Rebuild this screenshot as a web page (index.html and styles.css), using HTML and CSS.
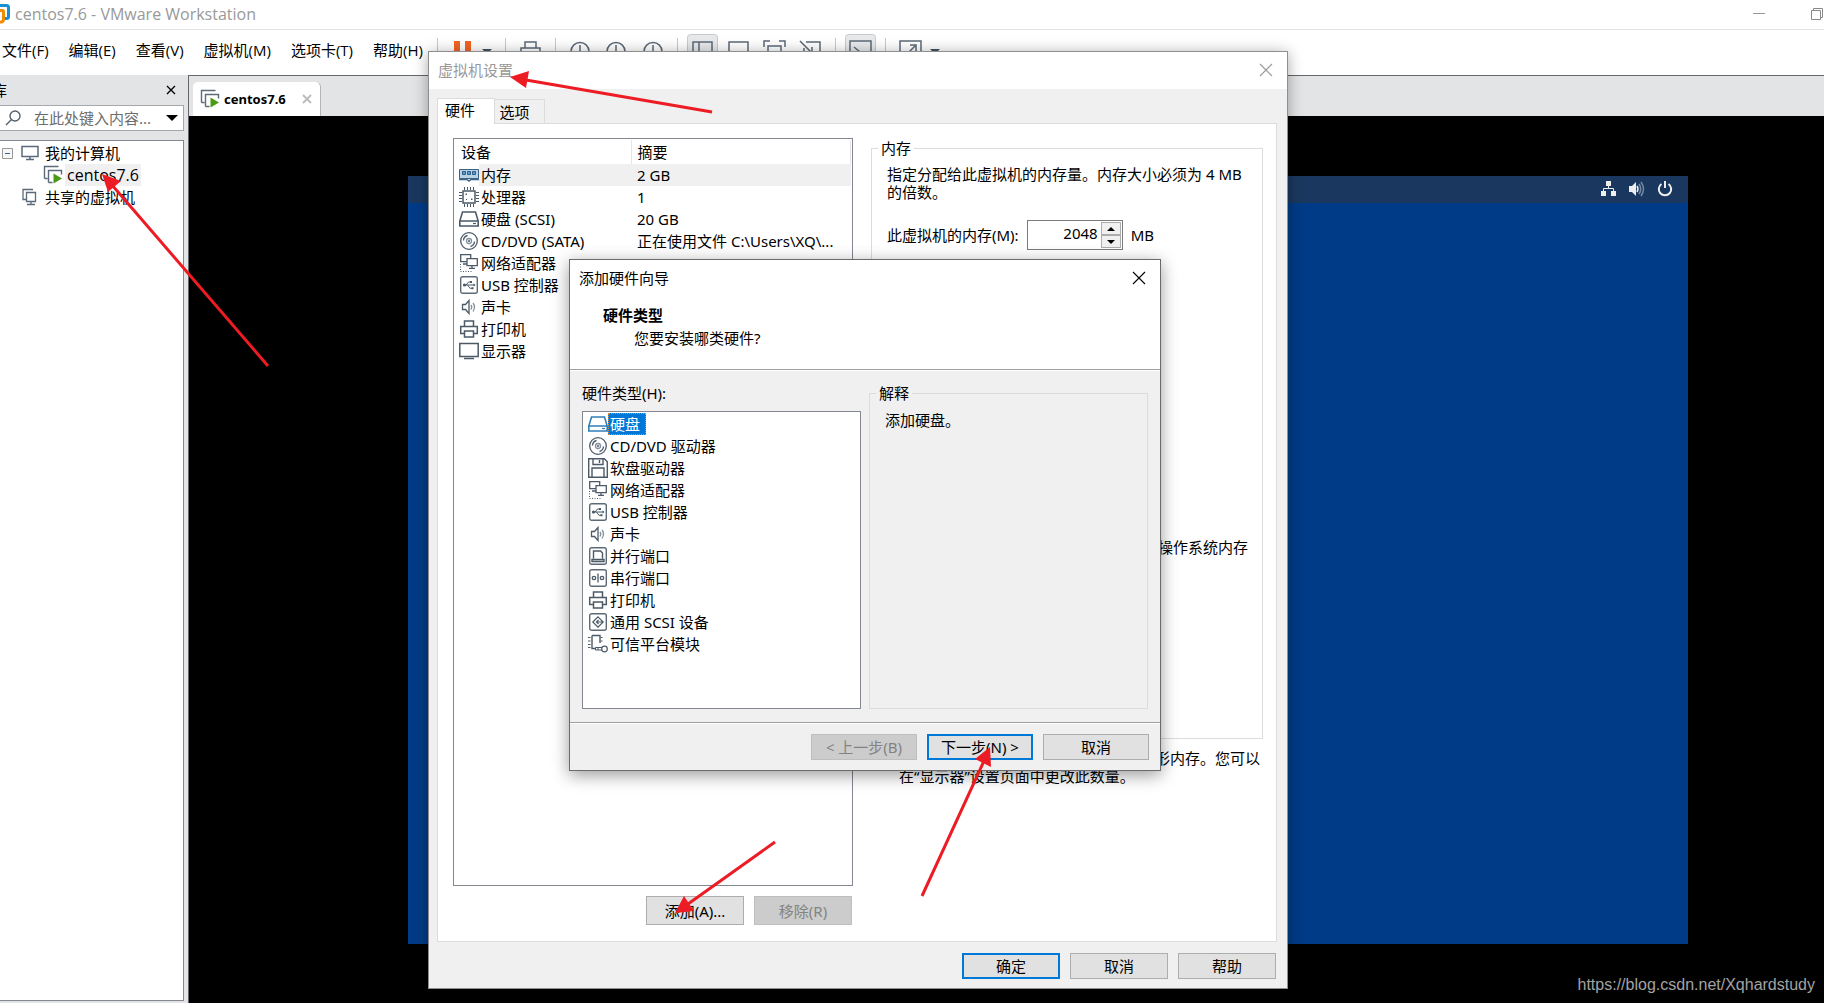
FILE: index.html
```
<!DOCTYPE html>
<html lang="zh-CN">
<head>
    <meta charset="UTF-8">
    <meta name="viewport" content="width=device-width, initial-scale=1.0">
    <title>centos7.6 - VMware Workstation</title>
    <link rel="stylesheet" href="styles.css">
</head>
<body>
    <!-- Icon set -->
    <svg class="sprite" aria-hidden="true">
        <symbol id="i-memory" viewBox="0 0 20 20">
            <path d="M.5 4.500h19v9h-19z" fill="#b9d3e6" stroke="#3d6486"/>
            <path d="M3.500 6.500h3v3h-3zM8.500 6.500h3v3h-3zM13.500 6.500h3v3h-3z" fill="#5b9bd0" stroke="#2f5f88"/>
            <path d="M0 14.500h8l2 1.500 2-1.500h8" fill="none" stroke="#3d6486" stroke-width="1.500"/>
        </symbol>
        <symbol id="i-cpu" viewBox="0 0 20 20">
            <path d="M4 4h12v12H4z" fill="#fff" stroke="#4c5a67" stroke-width="1.500"/>
            <path d="M5.500 0v3M8.500 0v3M11.500 0v3M14.500 0v3M5.500 17v3M8.500 17v3M11.500 17v3M14.500 17v3M0 5.500h3M0 8.500h3M0 11.500h3M0 14.500h3M17 5.500h3M17 8.500h3M17 11.500h3M17 14.500h3" stroke="#4c5a67"/>
            <path d="M6.500 6.500h1.500v1.500H6.500zM12 11.500h1.500V13H12zM7 12h1v1H7z" fill="#4c5a67"/>
        </symbol>
        <symbol id="i-disk" viewBox="0 0 20 20">
            <path d="M3.500 3h13l2.700 9v5H.8v-5zM.8 12h18.400" fill="none" stroke="currentColor" stroke-width="1.600"/>
            <path d="M14 14.500h3" stroke="currentColor" stroke-width="1.200"/>
        </symbol>
        <symbol id="i-cd" viewBox="0 0 20 20">
            <g fill="none" stroke="#4c5a67" stroke-width="1.300">
                <circle cx="10" cy="10" r="8.300"/><circle cx="10" cy="10" r="2.500" stroke="#8291a0"/>
                <path d="M4.500 9.500a5.500 5.500 0 0 1 4-5M15.500 10.500a5.500 5.500 0 0 1-4 5"/>
            </g>
            <circle cx="10" cy="10" r="1" fill="#4c5a67"/>
        </symbol>
        <symbol id="i-floppy" viewBox="0 0 20 20">
            <path d="M.7.700h15.600l3 3v15.600H.7zM5 .700v5.800h10V.700M11.500 2v3M4 19.300V10h12v9.300" fill="none" stroke="#4c5a67" stroke-width="1.400"/>
        </symbol>
        <symbol id="i-net" viewBox="0 0 20 20">
            <g fill="#fff" stroke="#4c5a67" stroke-width="1.300">
                <path d="M1.700 1.700h10v7h-10zM4 11h5"/><path d="M8 5.700h10.300v7H8zM13 13v2M10 15.300h6"/>
            </g>
            <path d="M1.500 11v7.500h11" fill="none" stroke="#4c5a67" stroke-dasharray="1 1.500"/>
        </symbol>
        <symbol id="i-usb" viewBox="0 0 20 20">
            <rect x="1.700" y="1.700" width="16.600" height="16.600" rx="2" fill="#fff" stroke="#5d6a76" stroke-width="1.400"/>
            <path d="M4 10h12M7 10l2.500-3h2M8.500 10l2.500 3.300h2" fill="none" stroke="#4c5a67"/>
            <circle cx="5.500" cy="10" r="1.600" fill="#4c5a67"/><path d="M11 6h2v2h-2zM12.500 12.300h2v2h-2zM14.500 8.500l2 1.500-2 1.500z" fill="#4c5a67"/>
        </symbol>
        <symbol id="i-sound" viewBox="0 0 20 20">
            <g fill="none" stroke="#4c5a67" stroke-width="1.300">
                <path d="M3.500 7.500h3l3.500-4v13l-3.500-4h-3z"/>
                <path d="M12 8q1.500 2 0 4.500M14 6q3 4 0 8.500" stroke="#8291a0"/>
            </g>
        </symbol>
        <symbol id="i-printer" viewBox="0 0 20 20">
            <path d="M5.500 7V2h9v5M5.500 14.500H1.700v-7h16.600v7h-3.800M5.500 12h9v6h-9z" fill="none" stroke="#4c5a67" stroke-width="1.500"/>
        </symbol>
        <symbol id="i-display" viewBox="0 0 20 20">
            <path d="M.8 2.500h18.400v13H.8z" fill="none" stroke="#4c5a67" stroke-width="1.500"/><path d="M5 17.500h10" stroke="#4c5a67" stroke-width="1.500"/>
        </symbol>
        <symbol id="i-parallel" viewBox="0 0 20 20">
            <rect x="1.700" y="1.700" width="16.600" height="16.600" rx="2" fill="#fff" stroke="#5d6a76" stroke-width="1.400"/>
            <path d="M5.500 12.500V5h7l2 2v5.500M4 15.500v-2h12v2z" fill="none" stroke="#4c5a67" stroke-width="1.400"/>
        </symbol>
        <symbol id="i-serial" viewBox="0 0 20 20">
            <rect x="1.700" y="1.700" width="16.600" height="16.600" rx="2" fill="#fff" stroke="#5d6a76" stroke-width="1.400"/>
            <g fill="none" stroke="#4c5a67" stroke-width="1.300"><circle cx="6" cy="10" r="1.700"/><circle cx="14" cy="10" r="1.700"/><path d="M10 5.500v9"/></g>
        </symbol>
        <symbol id="i-scsi" viewBox="0 0 20 20">
            <rect x="1.700" y="1.700" width="16.600" height="16.600" rx="2" fill="#fff" stroke="#5d6a76" stroke-width="1.400"/>
            <path d="M10 4.800l5.200 5.200-5.200 5.200L4.800 10zM9 10h6M10.500 8l-2 2 2 2" fill="none" stroke="#4c5a67" stroke-width="1.200"/>
        </symbol>
        <symbol id="i-tpm" viewBox="0 0 20 20">
            <path d="M4 1.500h8V9M4 1.500v13h4" fill="none" stroke="#4c5a67" stroke-width="1.400"/>
            <path d="M0 3.500h2.500M0 7h2.500M0 10.500h2.500M0 13.500h2.500M12.500 3.500h2M12.500 7h2" stroke="#4c5a67" stroke-width="1.200"/>
            <path d="M14 13.500H7.500v2.500H14M10 16v-2" fill="none" stroke="#4c5a67"/><circle cx="16.500" cy="15" r="2.800" fill="none" stroke="#4c5a67" stroke-width="1.200"/>
        </symbol>
        <symbol id="i-vm" viewBox="0 0 20 20">
            <path d="M1.500 13.500v-12h14M1.500 13.500h3M5.500 17.500v-12h13v4M5.500 17.500h4" fill="none" stroke="#5b6a78" stroke-width="1.400"/>
            <path d="M10.500 8.500l8.500 5-8.500 5z" fill="#4a9a17"/>
        </symbol>
        <symbol id="i-x" viewBox="0 0 14 14">
            <path d="M1 1l12 12M13 1L1 13" stroke="currentColor" stroke-width="1.100"/>
        </symbol>
    </svg>

    <div class="workstation">
        <header class="titlebar">
            <svg class="logo" width="11" height="24" viewBox="0 0 11 24">
                <path d="M0 2.500h6.500q2 0 2 2v9q0 2-2 2H2" fill="none" stroke="#1591d3" stroke-width="3"/>
                <path d="M0 7.500h2.500q1 0 1 1v8q0 2-2 2.500H0" fill="none" stroke="#f38b00" stroke-width="3"/>
            </svg>
            <h1>centos7.6 - VMware Workstation</h1>
            <div class="window-buttons">
                <button aria-label="最小化"><svg width="12" height="12"><path d="M0 5.500h12" stroke="#999"/></svg></button>
                <button aria-label="还原"><svg width="12" height="12"><path d="M.5 2.500h9v9h-9zM2.500 2V.500h9v9H10" fill="none" stroke="#888"/></svg></button>
            </div>
        </header>

        <div class="menubar">
            <nav class="menu">
                <a href="#">文件(F)</a>
                <a href="#">编辑(E)</a>
                <a href="#">查看(V)</a>
                <a href="#">虚拟机(M)</a>
                <a href="#">选项卡(T)</a>
                <a href="#">帮助(H)</a>
            </nav>
            <div class="toolbar">
                <svg width="520" height="44" viewBox="430 30 520 44">
                    <path d="M437.500 38v28M505.500 38v28M555.500 38v28M677.500 38v28M835.500 38v28M885.500 38v28" stroke="#c8c8c8"/>
                    <path d="M454 41h6v18h-6zM465 41h6v18h-6z" fill="#f26522"/>
                    <path d="M482 49h10l-5 5zM930 49h10l-5 5z" fill="#44525e"/>
                    <rect x="687.500" y="34.500" width="30" height="34" rx="3" fill="#e8e9eb" stroke="#c8c9cb"/>
                    <rect x="845.500" y="34.500" width="30" height="34" rx="3" fill="#e8e9eb" stroke="#c8c9cb"/>
                    <g fill="none" stroke="#5b6a78" stroke-width="1.500">
                        <path d="M525 48v-6h11v6M521 60V48h19v12M530 52h11"/>
                        <circle cx="580" cy="51.500" r="9"/><path d="M580 45v7l5 4"/>
                        <circle cx="616" cy="51.500" r="9"/><path d="M616 45v7l5 4"/>
                        <circle cx="653" cy="51.500" r="9"/><path d="M653 45v7l5 4"/>
                        <path d="M693 42h19v16h-19zM699 42v16M729 42h19v16h-19z"/>
                        <path d="M764 47v-6h6M779 41h6v6M768 58V46h13v12"/>
                        <path d="M806 42h14v16h-16V48M800 41l12 12M812 47v6h-6"/>
                        <path d="M850 41h21v18h-21zM854 47l6 5-6 5M900 41h21v18h-21zM907 54l8-8M910 45h6v6"/>
                    </g>
                </svg>
            </div>
        </div>

        <div class="workspace">
            <aside class="library">
                <div class="library-head">
                    <h2>库</h2>
                    <button aria-label="关闭库"><svg width="10" height="10" viewBox="0 0 10 10"><path d="M1 1l8 8M9 1L1 9" stroke="#000" stroke-width="1.300"/></svg></button>
                </div>
                <div class="search">
                    <svg width="16" height="16" viewBox="0 0 16 16"><circle cx="10" cy="6" r="5" fill="none" stroke="#55626e" stroke-width="1.400"/><path d="M6.500 9.500L1 15" stroke="#55626e" stroke-width="1.400"/></svg>
                    <input type="text" aria-label="搜索" placeholder="在此处键入内容...">
                    <button aria-label="筛选"><svg width="12" height="6"><path d="M0 0h12l-6 6z"/></svg></button>
                </div>
                <ul class="tree">
                    <li>
                        <svg class="toggle" width="11" height="11"><path d="M.5.500h10v10H.5z" fill="#f7f7f7" stroke="#999"/><path d="M3 5.500h5" stroke="#3a5fa5"/></svg>
                        <svg width="18" height="16" viewBox="0 0 18 16"><path d="M1 1.500h16v10H1zM9 12v2M5 14.500h8" fill="none" stroke="#5b6a78" stroke-width="1.500"/></svg>
                        <span>我的计算机</span>
                    </li>
                    <li class="child">
                        <svg width="20" height="20"><use href="#i-vm"/></svg>
                        <span class="current">centos7.6</span>
                    </li>
                    <li class="shared">
                        <svg width="18" height="18" viewBox="0 0 18 18"><path d="M5 11.500H2V1.500h10M5.500 4.500h9v9h-9zM10 14v2M6 16.500h8" fill="none" stroke="#5b6a78" stroke-width="1.300"/></svg>
                        <span>共享的虚拟机</span>
                    </li>
                </ul>
            </aside>

            <main class="viewer">
                <div class="vm-tabs">
                    <div class="vm-tab">
                        <svg width="20" height="20"><use href="#i-vm"/></svg>
                        <strong>centos7.6</strong>
                        <button aria-label="关闭选项卡"><svg width="10" height="10" viewBox="0 0 10 10"><path d="M1 1l8 8M9 1L1 9" stroke="#bbb" stroke-width="1.800"/></svg></button>
                    </div>
                </div>
                <div class="console">
                    <div class="guest">
                        <div class="guest-bar">
                            <svg width="16" height="16" viewBox="0 0 16 16" fill="#eee"><path d="M5 0h5v5H5zM0 10h5v5H0zM10 10h5v5h-5z"/><path d="M7.500 5v3M2.500 10V7.500h10V10" fill="none" stroke="#eee"/></svg>
                            <svg width="16" height="16" viewBox="0 0 16 16"><path d="M0 5h3l4-4v14l-4-4H0z" fill="#eee"/><path d="M8 5q2 3 0 6" fill="none" stroke="#eee" stroke-width="1.500"/><path d="M10 3q3.500 5 0 10M12 1q5 7 0 14" fill="none" stroke="#7388a3" stroke-width="1.500"/></svg>
                            <svg width="16" height="16" viewBox="0 0 16 16"><path d="M4.500 3a6.200 6.200 0 1 0 7 0M8 0v7" fill="none" stroke="#eee" stroke-width="2"/></svg>
                        </div>
                    </div>
                    <div class="watermark">https://blog.csdn.net/Xqhardstudy</div>
                </div>
            </main>
        </div>
    </div>

    <!-- Virtual machine settings -->
    <section class="dialog settings">
        <div class="dialog-title">
            <h2>虚拟机设置</h2>
            <button aria-label="关闭"><svg width="14" height="14"><use href="#i-x"/></svg></button>
        </div>
        <div class="settings-body">
            <div class="tabs">
                <button class="tab active">硬件</button>
                <button class="tab">选项</button>
            </div>
            <div class="tab-panel">
                <div class="devices">
                    <div class="device-list">
                        <table>
                            <thead>
                                <tr><th>设备</th><th>摘要</th></tr>
                            </thead>
                            <tbody>
                                <tr class="selected"><td><svg><use href="#i-memory"/></svg><span>内存</span></td><td>2 GB</td></tr>
                                <tr><td><svg><use href="#i-cpu"/></svg><span>处理器</span></td><td>1</td></tr>
                                <tr><td><svg><use href="#i-disk"/></svg><span>硬盘 (SCSI)</span></td><td>20 GB</td></tr>
                                <tr><td><svg><use href="#i-cd"/></svg><span>CD/DVD (SATA)</span></td><td>正在使用文件 C:\Users\XQ\...</td></tr>
                                <tr><td><svg><use href="#i-net"/></svg><span>网络适配器</span></td><td>NAT</td></tr>
                                <tr><td><svg><use href="#i-usb"/></svg><span>USB 控制器</span></td><td></td></tr>
                                <tr><td><svg><use href="#i-sound"/></svg><span>声卡</span></td><td></td></tr>
                                <tr><td><svg><use href="#i-printer"/></svg><span>打印机</span></td><td></td></tr>
                                <tr><td><svg><use href="#i-display"/></svg><span>显示器</span></td><td></td></tr>
                            </tbody>
                        </table>
                    </div>
                    <div class="device-actions">
                        <button class="btn">添加(A)...</button>
                        <button class="btn" disabled>移除(R)</button>
                    </div>
                </div>
                <div class="details">
                    <fieldset class="memory">
                        <legend>内存</legend>
                        <p>指定分配给此虚拟机的内存量。内存大小必须为 4 MB 的倍数。</p>
                        <div class="memory-size">
                            <label for="memory">此虚拟机的内存(M):</label>
                            <div class="spinner">
                                <input type="text" id="memory" value="2048">
                                <div class="spin">
                                    <button aria-label="增加"><svg width="8" height="4"><path d="M0 4l4-4 4 4z"/></svg></button>
                                    <button aria-label="减少"><svg width="8" height="4"><path d="M0 0h8L4 4z"/></svg></button>
                                </div>
                            </div>
                            <span>MB</span>
                        </div>
                        <p class="guest-memory">操作系统内存</p>
                    </fieldset>
                    <div class="video-note">
                        <p class="end">形内存。您可以</p>
                        <p>在“显示器”设置页面中更改此数量。</p>
                    </div>
                </div>
            </div>
            <div class="dialog-actions">
                <button class="btn default">确定</button>
                <button class="btn">取消</button>
                <button class="btn">帮助</button>
            </div>
        </div>
    </section>

    <!-- Add hardware wizard -->
    <section class="dialog wizard">
        <div class="dialog-title">
            <h2>添加硬件向导</h2>
            <button aria-label="关闭"><svg width="14" height="14"><use href="#i-x"/></svg></button>
        </div>
        <div class="wizard-head">
            <h3>硬件类型</h3>
            <p>您要安装哪类硬件?</p>
        </div>
        <div class="wizard-body">
            <div class="types">
                <div class="types-label" id="types-label">硬件类型(H):</div>
                <ul role="listbox" aria-labelledby="types-label">
                    <li role="option" aria-selected="true" class="selected"><svg><use href="#i-disk"/></svg><span>硬盘</span></li>
                    <li role="option"><svg><use href="#i-cd"/></svg><span>CD/DVD 驱动器</span></li>
                    <li role="option"><svg><use href="#i-floppy"/></svg><span>软盘驱动器</span></li>
                    <li role="option"><svg><use href="#i-net"/></svg><span>网络适配器</span></li>
                    <li role="option"><svg><use href="#i-usb"/></svg><span>USB 控制器</span></li>
                    <li role="option"><svg><use href="#i-sound"/></svg><span>声卡</span></li>
                    <li role="option"><svg><use href="#i-parallel"/></svg><span>并行端口</span></li>
                    <li role="option"><svg><use href="#i-serial"/></svg><span>串行端口</span></li>
                    <li role="option"><svg><use href="#i-printer"/></svg><span>打印机</span></li>
                    <li role="option"><svg><use href="#i-scsi"/></svg><span>通用 SCSI 设备</span></li>
                    <li role="option"><svg><use href="#i-tpm"/></svg><span>可信平台模块</span></li>
                </ul>
            </div>
            <fieldset class="explain">
                <legend>解释</legend>
                <p>添加硬盘。</p>
            </fieldset>
        </div>
        <div class="wizard-actions">
            <button class="btn" disabled>&lt; 上一步(B)</button>
            <button class="btn default">下一步(N) &gt;</button>
            <button class="btn">取消</button>
        </div>
    </section>

    <!-- Red pointer arrows -->
    <svg class="arrows" width="1100" height="960" viewBox="0 0 1100 960" aria-hidden="true">
        <g stroke="#ed1c24" stroke-width="3">
            <path d="M712 112L526 80M268 366L112 185M775 842L688 904M922 896L984 761"/>
        </g>
        <g fill="#ed1c24">
            <path d="M510 77l19-6-3 17zM102 174l19 7-13 11zM675 913l9-17 10 15zM990 747l-15 12 16 8z"/>
        </g>
    </svg>
</body>
</html>
```
FILE: styles.css
```
* {
    margin: 0;
    padding: 0;
    box-sizing: border-box;
}

body {
    font-family: 'Noto Sans', 'Noto Sans CJK SC', sans-serif;
    font-size: 15px;
    line-height: 20px;
    color: #000;
    min-height: 100vh;
    position: relative;
    overflow: hidden;
}

button, input {
    font: inherit;
    color: inherit;
    border: none;
    background: none;
}

svg {
    display: block;
    flex: none;
}

ul {
    list-style: none;
}

h1, h2 {
    font-size: 15px;
    font-weight: normal;
}

.sprite {
    position: absolute;
    width: 0;
    height: 0;
}

/* Main window */
.workstation {
    display: flex;
    flex-direction: column;
    height: 100vh;
}

.titlebar {
    display: flex;
    align-items: center;
    height: 30px;
    border-bottom: 1px solid #e3e3e3;
    background: #fff;
}

.titlebar h1 {
    flex: 1;
    margin-left: 4px;
    padding-bottom: 2px;
    font-family: 'Open Sans', sans-serif;
    font-size: 16px;
    color: #999;
}

.window-buttons {
    display: flex;
    gap: 46px;
    padding: 0 1px 1px 0;
}

.menubar {
    display: flex;
    height: 45px;
    background: #fff;
}

.menu {
    display: flex;
    align-items: center;
    gap: 20px;
    width: 430px;
    padding: 0 0 6px 2px;
    font-family: 'Open Sans', 'Noto Sans CJK SC', sans-serif;
    white-space: nowrap;
}

.menu a {
    color: #000;
    text-decoration: none;
}

.workspace {
    display: flex;
    flex: 1;
    min-height: 0;
    background: #e3e4e6;
}

/* Library side bar */
.library {
    display: flex;
    flex-direction: column;
    width: 188px;
    padding: 0 4px 2px 0;
    border-top: 1px solid #e3e4e6;
}

.library-head {
    display: flex;
    justify-content: space-between;
    align-items: center;
    height: 29px;
    padding: 0 8px 2px 0;
}

.library-head h2 {
    text-indent: -8px;
}

.search {
    display: flex;
    align-items: center;
    height: 26px;
    padding: 0 5px;
    border: 1px solid #a5a7aa;
    border-left: none;
    background: #fff;
}

.search input {
    flex: 1;
    min-width: 0;
    margin-left: 13px;
}

.search input::placeholder {
    color: #6d6d6d;
}

.tree {
    flex: 1;
    margin-top: 9px;
    padding-top: 1px;
    border: 1px solid #828790;
    border-left: none;
    background: #fff;
}

.tree li {
    display: flex;
    align-items: center;
    gap: 6px;
    height: 22px;
    padding-left: 2px;
    white-space: nowrap;
}

.tree .toggle {
    margin-right: 2px;
}

.tree .child {
    gap: 2px;
    padding-left: 43px;
}

.tree .shared {
    padding-left: 21px;
}

.tree .current {
    padding: 1px 2px;
    background: #f0f0f0;
    font-family: 'Open Sans', sans-serif;
    font-size: 16px;
}

/* Console */
.viewer {
    display: flex;
    flex-direction: column;
    flex: 1;
    border-top: 1px solid #66666b;
    border-left: 1px solid #66666b;
}

.vm-tabs {
    height: 40px;
    padding: 6px 0 0 4px;
}

.vm-tab {
    display: flex;
    align-items: center;
    width: 128px;
    height: 34px;
    padding: 0 8px 0 7px;
    border-right: 1px solid #b5b5b5;
    border-radius: 5px 5px 0 0;
    background: #fff;
}

.vm-tab strong {
    flex: 1;
    margin-left: 4px;
    font-size: 13px;
}

.console {
    position: relative;
    display: flex;
    flex: 1;
    padding: 60px 136px 59px 219px;
    background: #000;
}

.guest {
    flex: 1;
    background: #003b87;
}

.guest-bar {
    display: flex;
    justify-content: flex-end;
    align-items: center;
    gap: 12px;
    height: 27px;
    padding: 0 15px 1px 0;
    background: #1a385f;
}

.watermark {
    position: absolute;
    right: 9px;
    bottom: 8px;
    font-family: 'Liberation Sans', Arial, sans-serif;
    font-size: 16px;
    color: #a3a3a3;
}

/* Dialogs */
.dialog {
    position: absolute;
    background: #f0f0f0;
}

.dialog-title {
    display: flex;
    justify-content: space-between;
    align-items: center;
    height: 37px;
    padding: 0 14px 2px 9px;
    background: #fff;
}

.dialog-title button {
    line-height: 0;
}

.btn {
    height: 26px;
    border: 1px solid #adadad;
    background: #e1e1e1;
}

.btn.default {
    border: 2px solid #0078d7;
}

.btn:disabled {
    border-color: #bfbfbf;
    background: #ccc;
    color: #838383;
}

fieldset {
    min-width: 0;
    border: 1px solid #dcdcdc;
}

legend {
    padding: 0 3px;
}

/* Settings dialog */
.settings {
    top: 51px;
    left: 428px;
    width: 860px;
    border: 1px solid #8f8f8f;
    box-shadow: 0 2px 14px rgba(0, 0, 0, 0.35);
}

.settings .dialog-title {
    color: #999;
}

.settings-body {
    padding: 9px 10px 9px 8px;
}

.tabs {
    display: flex;
    align-items: flex-end;
}

.tab {
    width: 50px;
    height: 24px;
    border: 1px solid #dcdcdc;
    border-width: 1px 1px 0 0;
    padding-right: 10px;
}

.tab.active {
    position: relative;
    width: 58px;
    height: 26px;
    margin-bottom: -1px;
    padding: 0 12px 3px 0;
    border-left-width: 1px;
    background: #fff;
}

.tab-panel {
    display: flex;
    gap: 18px;
    padding: 14px 13px 16px 15px;
    border: 1px solid #dcdcdc;
    background: #fff;
}

.devices {
    flex: none;
    width: 400px;
}

.device-list {
    height: 748px;
    padding: 1px;
    border: 1px solid #828790;
}

.device-list table {
    width: 100%;
    table-layout: fixed;
    border-collapse: collapse;
}

.device-list th {
    width: 176px;
    height: 24px;
    padding-left: 6px;
    border-right: 1px solid #e5e5e5;
    font-weight: normal;
    text-align: left;
}

.device-list th + th {
    width: auto;
}

.device-list td {
    height: 22px;
    padding-left: 6px;
    white-space: nowrap;
}

.device-list td:first-child {
    display: flex;
    align-items: center;
    padding-left: 4px;
}

.device-list td span {
    flex: 1;
    padding: 1px 2px;
}

.device-list .selected span,
.device-list .selected td + td {
    background: #f0f0f0;
}

.device-list svg,
.types svg {
    width: 20px;
    height: 20px;
    color: #4c5a67;
}

.device-actions {
    display: flex;
    justify-content: flex-end;
    gap: 10px;
    margin-top: 10px;
    padding-right: 1px;
}

.device-actions .btn {
    width: 98px;
    height: 29px;
}

.details {
    flex: 1;
    display: flex;
    flex-direction: column;
}

.memory {
    height: 601px;
    padding: 7px 14px 7px 15px;
}

.memory legend {
    margin-left: -9px;
}

.memory p,
.video-note p {
    line-height: 18px;
}

.memory-size {
    display: flex;
    align-items: center;
    margin-top: 19px;
}

.spinner {
    display: flex;
    width: 96px;
    height: 30px;
    margin: 0 8px;
    padding: 1px;
    border: 1px solid #7a7a7a;
}

.spinner input {
    flex: 1;
    min-width: 0;
    padding: 0 3px 5px 0;
    text-align: right;
}

.spin {
    display: flex;
    flex-direction: column;
    width: 20px;
}

.spin button {
    display: flex;
    flex: 1;
    justify-content: center;
    align-items: center;
    border: 1px solid #acacac;
    background: #f0f0f0;
}

.guest-memory {
    margin-top: 288px;
    text-align: right;
}

.video-note {
    padding: 10px 3px 0 28px;
}

.video-note .end {
    text-align: right;
}

.dialog-actions {
    display: flex;
    justify-content: flex-end;
    gap: 10px;
    margin-top: 11px;
    padding-right: 1px;
}

.dialog-actions .btn {
    width: 98px;
}

/* Wizard */
.wizard {
    top: 259px;
    left: 569px;
    width: 592px;
    border: 1px solid #6b6b6b;
    box-shadow: 0 4px 16px rgba(0, 0, 0, 0.4);
}

.wizard-head {
    height: 73px;
    padding: 8px 33px;
    border-bottom: 1px solid #a0a0a0;
    background: #fff;
}

.wizard-head h3 {
    font-size: 15px;
}

.wizard-head p {
    padding: 3px 31px;
}

.wizard-body {
    display: flex;
    gap: 8px;
    padding: 12px 12px 13px;
    border-top: 1px solid #fff;
    border-bottom: 1px solid #a0a0a0;
}

.types {
    width: 279px;
}

.types-label {
    margin-bottom: 8px;
}

.types ul {
    height: 298px;
    padding: 1px 5px;
    border: 1px solid #828790;
    background: #fff;
}

.types li {
    display: flex;
    align-items: center;
    height: 22px;
}

.types li span {
    padding: 1px 2px;
}

.types .selected span {
    padding-right: 6px;
    background: #0078d7;
    color: #fff;
    outline: 1px dotted #e08a3c;
    outline-offset: -1px;
}

.types .selected svg {
    color: #2f7fb8;
}

.explain {
    flex: 1;
    padding: 7px 15px;
}

.explain legend {
    margin-left: -9px;
}

.wizard-actions {
    display: flex;
    justify-content: flex-end;
    gap: 10px;
    padding: 10px 11px;
    border-top: 1px solid #fff;
}

.wizard-actions .btn {
    width: 106px;
}

.arrows {
    position: absolute;
    top: 0;
    left: 0;
    pointer-events: none;
}
```
